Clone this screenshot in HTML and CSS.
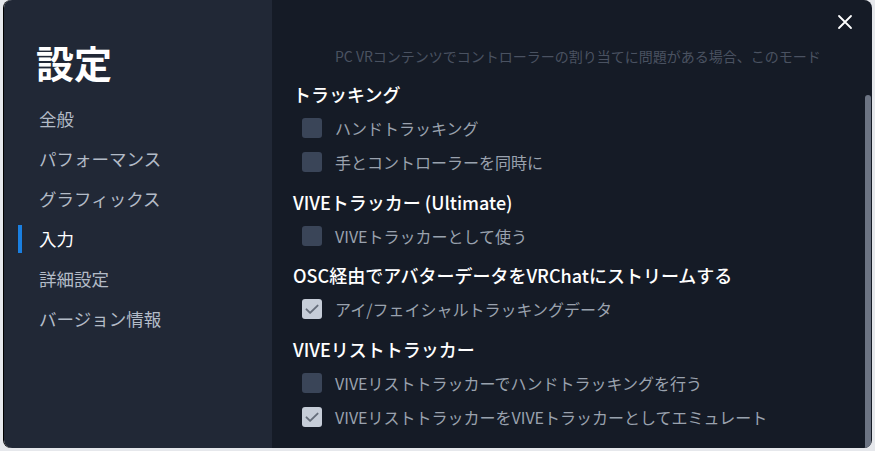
FILE: index.html
```html
<!DOCTYPE html>
<html lang="ja">
<head>
  <meta charset="UTF-8">
  <meta name="viewport" content="width=device-width, initial-scale=1">
  <title>設定</title>
  <link rel="stylesheet" href="styles.css">
</head>
<body>
  <div class="dialog" role="dialog" aria-label="設定">
    <aside class="sidebar">
      <h1 class="title">設定</h1>
      <nav class="nav">
        <a class="nav-item">全般</a>
        <a class="nav-item">パフォーマンス</a>
        <a class="nav-item">グラフィックス</a>
        <a class="nav-item active">入力</a>
        <a class="nav-item">詳細設定</a>
        <a class="nav-item">バージョン情報</a>
      </nav>
    </aside>

    <main class="panel">
      <div class="content">
        <p class="hint">PC VRコンテンツでコントローラーの割り当てに問題がある場合、このモード</p>

        <section class="group">
          <h2 class="group-title">トラッキング</h2>
          <label class="option"><span class="box"></span>ハンドトラッキング</label>
          <label class="option"><span class="box"></span>手とコントローラーを同時に</label>
        </section>

        <section class="group">
          <h2 class="group-title">VIVEトラッカー (Ultimate)</h2>
          <label class="option"><span class="box"></span>VIVEトラッカーとして使う</label>
        </section>

        <section class="group">
          <h2 class="group-title">OSC経由でアバターデータをVRChatにストリームする</h2>
          <label class="option"><span class="box checked"><svg viewBox="0 0 20 20" width="20" height="20"><path d="M4.5 10.3l3.6 3.6L15.6 6.6" fill="none" stroke="#656d7a" stroke-width="1.9" stroke-linecap="round" stroke-linejoin="round"/></svg></span>アイ/フェイシャルトラッキングデータ</label>
        </section>

        <section class="group">
          <h2 class="group-title">VIVEリストトラッカー</h2>
          <label class="option"><span class="box"></span>VIVEリストトラッカーでハンドトラッキングを行う</label>
          <label class="option"><span class="box checked"><svg viewBox="0 0 20 20" width="20" height="20"><path d="M4.5 10.3l3.6 3.6L15.6 6.6" fill="none" stroke="#656d7a" stroke-width="1.9" stroke-linecap="round" stroke-linejoin="round"/></svg></span>VIVEリストトラッカーをVIVEトラッカーとしてエミュレート</label>
        </section>
      </div>
      <div class="scrollbar"><div class="thumb"></div></div>

      <button type="button" class="close" aria-label="閉じる">
        <svg viewBox="0 0 16 16" width="16" height="16"><path d="M2 2L14 14M14 2L2 14" stroke="#fff" stroke-width="1.8" stroke-linecap="round"/></svg>
      </button>
    </main>
  </div>
</body>
</html>
```

FILE: styles.css
```css
* {
  box-sizing: border-box;
}
body {
  margin: 0;
  background: #e6e8ec;
  font-family: "Noto Sans CJK JP", "Noto Sans", sans-serif;
  user-select: none;
}
.dialog {
  display: flex;
  width: 868px;
  height: 448px;
  margin-left: 4px;
  border-radius: 8px;
  overflow: hidden;
  box-shadow: -1px 0 0 #000;
}

/* Sidebar */
.sidebar {
  width: 268px;
  flex-shrink: 0;
  background: #212836;
  padding: 38px 0 0 32px;
}
.title {
  margin: 0 0 13px;
  font-size: 38px;
  line-height: 48px;
  font-weight: 700;
  color: #fff;
}
.nav {
  display: flex;
  flex-direction: column;
}
.nav-item {
  position: relative;
  height: 40px;
  line-height: 40px;
  padding-left: 3px;
  font-size: 17.5px;
  color: #b3bbc7;
  cursor: pointer;
}
.nav-item.active {
  color: #fff;
}
.nav-item.active::before {
  content: "";
  position: absolute;
  left: -18px;
  top: 6px;
  width: 4px;
  height: 28px;
  background: #1a7fe0;
}

/* Right panel */
.panel {
  position: relative;
  flex: 1;
  display: flex;
  background: #151b26;
}
.content {
  flex: 1;
  padding: 46px 0 0 21px;
}
.hint {
  margin: 0 0 15px;
  padding-left: 42px;
  font-size: 14px;
  line-height: 20px;
  color: #4a5261;
  white-space: nowrap;
}
.group {
  margin-bottom: 9.5px;
}
.group-title {
  margin: 0 0 4px;
  font-size: 18px;
  line-height: 26px;
  font-weight: 500;
  color: #fff;
}
.option {
  display: flex;
  align-items: center;
  gap: 13px;
  height: 34px;
  padding-left: 9px;
  font-size: 16px;
  color: #9aa2ae;
}
.box {
  width: 20px;
  height: 20px;
  flex-shrink: 0;
  border-radius: 3px;
  background: #3a4558;
}
.box.checked {
  background: #c6cdd8;
}
.box svg {
  display: block;
}

.scrollbar {
  width: 6px;
  margin-right: 1px;
  padding-top: 95px;
}
.thumb {
  height: 100%;
  background: #6c7483;
  border-radius: 3px 3px 0 0;
}

.close {
  position: absolute;
  top: 14px;
  right: 19px;
  padding: 0;
  border: none;
  background: none;
  cursor: pointer;
}
.close svg {
  display: block;
}
```
